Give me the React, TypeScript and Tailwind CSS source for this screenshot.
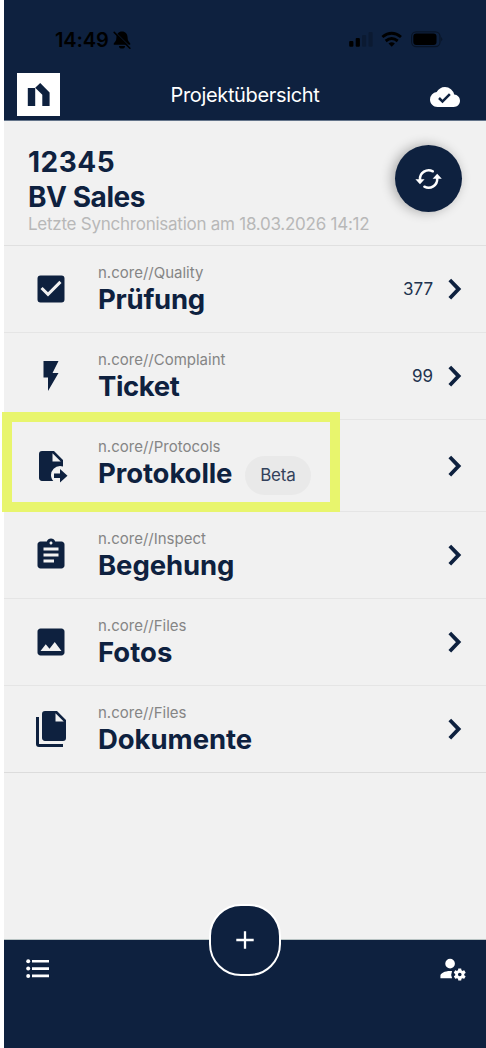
import type { ReactNode } from "react"
import { MdAssignment, MdCheckBox, MdCloudDone, MdFlashOn, MdImage } from "react-icons/md"

interface Module {
  area: string
  title: string
  tracking: string
  icon: ReactNode
  count?: number
  beta?: boolean
}

function FileMoveIcon() {
  return (
    <svg viewBox="0 0 24 24" className="size-9" fill="currentColor">
      <path d="M14 17H18V14L23 18.5L18 23V20H14V17M13 9H18.5L13 3.5V9M6 2H14L20 8V12.34C19.37 12.12 18.7 12 18 12A6 6 0 0 0 12 18C12 19.54 12.58 20.94 13.53 22H6C4.89 22 4 21.1 4 20V4A2 2 0 0 1 6 2Z" />
    </svg>
  )
}

function FilesIcon() {
  return (
    <svg viewBox="0 0 24 24" className="size-9" fill="currentColor">
      <path d="M15 7H20.5L15 1.5V7M8 0H16L22 6V18A2 2 0 0 1 20 20H8C6.89 20 6 19.1 6 18V2A2 2 0 0 1 8 0M4 4V22H20V24H4A2 2 0 0 1 2 22V4H4Z" />
    </svg>
  )
}

function AccountCogIcon() {
  return (
    <svg viewBox="0 0 24 24" className="size-[29px]" fill="currentColor" fillRule="evenodd">
      <path d="M10 4A4 4 0 1 0 10 12A4 4 0 1 0 10 4M10 14C5.58 14 2 15.79 2 18V20H11.68A7 7 0 0 1 11.64 14.09C11.11 14.03 10.56 14 10 14Z" />
      <path d="M17 12C16.87 12 16.76 12.09 16.74 12.21L16.55 13.53C16.25 13.66 15.96 13.82 15.7 14L14.46 13.5C14.35 13.5 14.22 13.5 14.15 13.63L13.15 15.36C13.09 15.47 13.11 15.6 13.21 15.68L14.27 16.5C14.25 16.67 14.24 16.83 14.24 17C14.24 17.17 14.25 17.33 14.27 17.5L13.21 18.32C13.12 18.4 13.09 18.53 13.15 18.64L14.15 20.37C14.21 20.5 14.34 20.5 14.46 20.5L15.7 20C15.96 20.18 16.24 20.35 16.55 20.47L16.74 21.79C16.76 21.91 16.86 22 17 22H19C19.11 22 19.22 21.91 19.24 21.79L19.43 20.47C19.73 20.34 20 20.18 20.27 20L21.5 20.5C21.63 20.5 21.76 20.5 21.83 20.37L22.83 18.64C22.89 18.53 22.86 18.4 22.77 18.32L21.7 17.5C21.72 17.33 21.74 17.17 21.74 17C21.74 16.83 21.73 16.67 21.7 16.5L22.76 15.68C22.85 15.6 22.88 15.47 22.82 15.36L21.82 13.63C21.76 13.5 21.63 13.5 21.5 13.5L20.27 14C20 13.82 19.73 13.65 19.42 13.53L19.23 12.21C19.22 12.09 19.11 12 19 12H17M18 15.5A1.5 1.5 0 1 1 18 18.5A1.5 1.5 0 1 1 18 15.5Z" />
    </svg>
  )
}

const modules: Module[] = [
  { area: "n.core//Quality", title: "Prüfung", tracking: "tracking-[-0.25px]", icon: <MdCheckBox className="size-9" />, count: 377 },
  { area: "n.core//Complaint", title: "Ticket", tracking: "tracking-[-0.4px]", icon: <MdFlashOn className="size-9" />, count: 99 },
  { area: "n.core//Protocols", title: "Protokolle", tracking: "tracking-[-0.1px]", icon: <FileMoveIcon />, beta: true },
  { area: "n.core//Inspect", title: "Begehung", tracking: "tracking-[-0.1px]", icon: <MdAssignment className="size-9" /> },
  { area: "n.core//Files", title: "Fotos", tracking: "tracking-[0px]", icon: <MdImage className="size-9" /> },
  { area: "n.core//Files", title: "Dokumente", tracking: "tracking-[-0.05px]", icon: <FilesIcon /> },
]

function StatusBar() {
  return (
    <div className="flex h-[73px] items-start justify-between pt-[28px] pl-[51px] pr-[43px] text-black">
      <div className="flex items-center gap-[4px]">
        <span className="text-[20px] leading-6 font-semibold tracking-[-0.1px]">14:49</span>
        <svg viewBox="0 0 18 18" className="h-[18px] w-[18px]">
          <path d="M9 0.6C5.4 0.6 3.6 3.2 3.4 6.5C3.3 9.5 2.6 10.4 0.8 12.3V13.8H17.2V12.3C15.4 10.4 14.7 9.5 14.6 6.5C14.4 3.2 12.6 0.6 9 0.6ZM6 14.9A3 2.6 0 0 0 12 14.9Z" fill="currentColor" />
          <path d="M2.4 1.2L17.6 16.2" stroke="#0e213f" strokeWidth="1" />
          <path d="M1.2 1.4L16.9 17.2" stroke="currentColor" strokeWidth="1.5" strokeLinecap="round" />
        </svg>
      </div>
      <svg viewBox="0 0 94 18" className="mt-[2px] h-[18px] w-[94px]">
        <rect x="0.2" y="11" width="4.2" height="5.7" rx="1" />
        <rect x="6.7" y="8" width="4.2" height="8.7" rx="1" />
        <rect x="13" y="5" width="4.2" height="11.7" rx="1" opacity=".2" />
        <rect x="19.5" y="2" width="4.2" height="14.7" rx="1" opacity=".2" />
        <g fill="none" stroke="currentColor" strokeWidth="2.9">
          <path d="M33.4 7Q42.7 -0.6 52 7" />
          <path d="M36.7 11Q42.7 6.2 48.7 11" />
        </g>
        <path d="M39.5 13.5Q42.7 10.8 45.9 13.5L42.7 16.7Z" />
        <rect x="62.6" y="1.8" width="28.4" height="14.8" rx="4.6" fill="none" stroke="#000" strokeOpacity=".4" strokeWidth="1.2" />
        <rect x="64.3" y="3.6" width="23.2" height="11.4" rx="3" />
        <path d="M92.2 7Q94.4 9.2 92.2 11.4Z" opacity=".4" />
      </svg>
    </div>
  )
}

function ModuleRow({ area, title, tracking, icon, count, beta }: Module) {
  return (
    <div
      className={`relative flex items-center border-b border-[#e5e5e5] pl-[29px] pr-[23px] last:border-[#dcdcdc] ${beta ? "h-[92px]" : "h-[87px]"}`}
    >
      <div className="w-[65px] shrink-0">{icon}</div>
      <div className={`flex-1 ${beta ? "mb-[6px]" : ""}`}>
        <div className="h-[22px] text-[15px] leading-[22px] text-[#858585]">{area}</div>
        <div className="flex h-8 items-center gap-[13px]">
          <span className={`-mt-[2px] text-[27.5px] leading-8 font-bold ${tracking}`}>{title}</span>
          {beta && (
            <span className="mt-1 flex h-[39px] w-[66px] items-center justify-center rounded-full bg-[#e9e9e9] pr-px text-[17px] tracking-[-0.2px] text-[#33415b]">
              Beta
            </span>
          )}
        </div>
      </div>
      {count !== undefined && <span className="mt-[2px] mr-[15px] text-[17px] text-[#22334f]">{count}</span>}
      <svg viewBox="0 0 15 22" className="h-[22px] w-[15px]" fill="none" stroke="currentColor" strokeWidth="3.8">
        <path d="M1.8 2L10.6 11.1L1.8 20.2" />
      </svg>
      {/* Highlight frame */}
      {beta && <div className="absolute top-[-8px] left-[-2px] h-[100px] w-[338px] border-10 border-[#e8f56d]" />}
    </div>
  )
}

export default function App() {
  return (
    <div className="h-[1048px] w-[486px] overflow-hidden bg-white pl-1 font-['Inter','Liberation_Sans',sans-serif] text-[#0e213f]">
      <div className="flex h-full flex-col bg-[#f1f1f1]">
        <header className="h-[121px] shrink-0 border-b border-[#64748a] bg-[#0e213f]">
          <StatusBar />
          <div className="flex h-[43px] items-center justify-between pr-[26px] pl-[13px] text-white">
            <svg viewBox="0 0 43 43" className="size-[43px]">
              <path d="M0 0H43V43H0Z" fill="#fff" />
              <path d="M10.8 15H18.2V33H10.8ZM18.2 14.8L23.2 10L32.6 19.5V33H25.3V21.8Z" fill="#0e213f" />
            </svg>
            <h1 className="text-[20px] tracking-[-0.35px]">Projektübersicht</h1>
            <MdCloudDone className="mt-[5px] size-[30px]" />
          </div>
        </header>

        <section className="flex h-[125px] shrink-0 justify-between border-b border-[#e0e0e0] pr-6 pl-[24px]">
          <div className="pt-6">
            <div className="text-[28px] leading-[35px] font-bold tracking-[0.5px]">12345</div>
            <div className="text-[28px] leading-[34px] font-bold tracking-[-0.45px]">BV Sales</div>
            <div className="text-[17px] leading-5 tracking-[-0.25px] whitespace-nowrap text-[#b8b8b8]">
              Letzte Synchronisation am 18.03.2026 14:12
            </div>
          </div>
          <button className="mt-6 flex size-[67px] items-center justify-center rounded-full bg-[#0e213f] text-white shadow-[-3px_0_12px_rgba(0,0,0,0.3)]">
            <svg viewBox="0 0 28 24" className="h-6 w-7">
              <g fill="none" stroke="currentColor" strokeWidth="2.5" strokeLinecap="round">
                <path d="M5 12.5A8.7 8.7 0 0 1 17.8 4.3" />
                <path d="M22.2 11.5A8.7 8.7 0 0 1 9.4 19.7" />
              </g>
              <path d="M0.4 12.3H9.6L5 17.3ZM17.6 11.7H26.8L22.2 6.7Z" fill="currentColor" />
            </svg>
          </button>
        </section>

        <main className="flex-1">
          {modules.map((m, i) => (
            <ModuleRow key={i} {...m} />
          ))}
        </main>

        <footer className="relative flex h-[109px] shrink-0 items-start justify-between border-t border-[#b8c3c3] bg-[#0e213f] pt-[14px] pr-[19px] pl-[22px] text-white">
          <svg viewBox="0 0 24 20" className="mt-[5px] h-5 w-6" fill="currentColor">
            <circle cx="2.2" cy="2.3" r="2" />
            <circle cx="2.2" cy="9.6" r="2" />
            <circle cx="2.2" cy="16.9" r="2" />
            <path d="M6 1H23V3.6H6ZM6 8.3H23V10.9H6ZM6 15.6H23V18.2H6Z" />
          </svg>
          <AccountCogIcon />
          <button className="absolute -top-9 left-[205px] flex size-[72px] items-center justify-center rounded-[32px] border-[2.5px] border-white bg-[#0e213f]">
            <svg viewBox="0 0 18 18" className="size-[18px]" stroke="currentColor" strokeWidth="2.3">
              <path d="M9 0.3V17.7M0.3 9H17.7" />
            </svg>
          </button>
        </footer>
      </div>
    </div>
  )
}
